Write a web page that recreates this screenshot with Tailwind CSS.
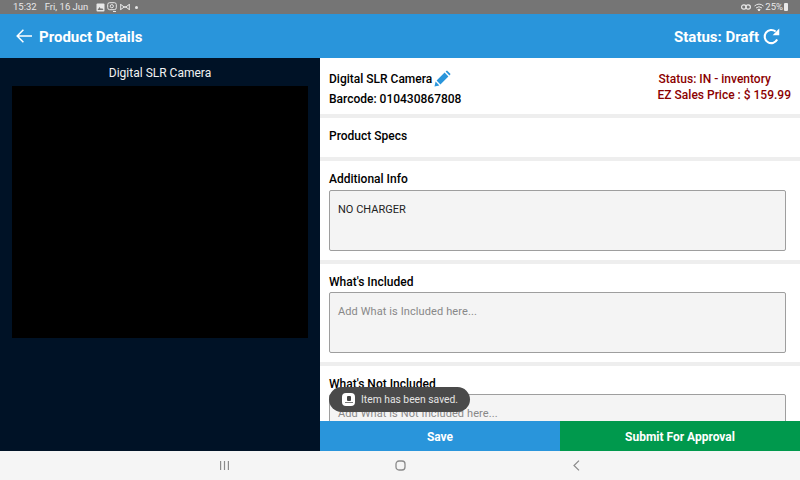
<!DOCTYPE html>
<html lang="en">
<head>
	<meta charset="UTF-8">
	<title>Product Details</title>
	<script src="https://cdn.jsdelivr.net/npm/@tailwindcss/browser@4"></script>
</head>
<body class="w-[800px] h-[480px] overflow-hidden font-['Roboto',sans-serif] flex flex-col bg-white relative">
	<!-- Status bar -->
	<div class="h-[14px] shrink-0 bg-[#757575] flex items-center justify-between pl-[13px] pr-[12px] text-[9.5px] text-[#e8e8e8]">
		<div class="flex items-center">
			<span>15:32</span>
			<span class="ml-[8px]">Fri, 16 Jun</span>
			<svg class="ml-[8px]" width="9" height="9" viewBox="0 0 9 9"><rect x="0.5" y="0.5" width="8" height="8" rx="1" fill="#e8e8e8"/><path d="M1.5 7 L3.5 4 L5 6 L6 5 L7.5 7Z" fill="#757575"/></svg>
			<svg class="ml-[2px]" width="10" height="10" viewBox="0 0 10 10" fill="none" stroke="#e8e8e8"><rect x="0.7" y="0.7" width="8.6" height="7" rx="2"/><circle cx="4.8" cy="4.2" r="1.6"/><path d="M6 9.5h3"/></svg>
			<svg class="ml-[3px]" width="10" height="8" viewBox="0 0 10 8" fill="none" stroke="#e8e8e8"><path d="M0.7 1v6M9.3 1v6M0.7 1.5 L5 4.5 L9.3 1.5M0.7 6.5 L5 3.5 L9.3 6.5"/></svg>
			<span class="ml-[5px] w-[3px] h-[3px] rounded-full bg-[#e8e8e8]"></span>
		</div>
		<div class="flex items-center">
			<svg width="10" height="6" viewBox="0 0 10 6" fill="none" stroke="#e8e8e8" stroke-width="1.2"><rect x="0.6" y="0.8" width="4.6" height="4.4" rx="2.2"/><rect x="4.8" y="0.8" width="4.6" height="4.4" rx="2.2"/></svg>
			<svg class="ml-[3px]" width="10" height="9" viewBox="0 0 10 9" fill="none" stroke="#e8e8e8"><path d="M0.5 3 Q5 -0.8 9.5 3M2 5 Q5 2.4 8 5"/><path d="M3.8 6.6 Q5 5.6 6.2 6.6 L5 8Z" fill="#e8e8e8"/></svg>
			<span class="ml-[1px]">25%</span>
			<span class="ml-[1px] w-[4px] h-[8px] bg-[#e8e8e8] rounded-[1px]"></span>
		</div>
	</div>

	<!-- Header -->
	<header class="h-[44px] shrink-0 bg-[#2995db] flex items-center justify-between pl-[16px] pr-[20px] text-white">
		<div class="flex items-center">
			<svg width="16" height="14" viewBox="0 0 16 14" fill="none" stroke="white" stroke-width="1.5"><path d="M16 7H1.2M7.4 0.8 L1.2 7 L7.4 13.2"/></svg>
			<span class="ml-[7px] pt-[2px] text-[15px] font-bold">Product Details</span>
		</div>
		<div class="flex items-center">
			<span class="pt-[2px] text-[15px] font-bold">Status: Draft</span>
			<svg class="ml-[4px]" width="17" height="17" viewBox="0 0 18 18" fill="none"><path d="M15 12.2 A7 7 0 1 1 13.4 3.8" stroke="white" stroke-width="2.2"/><path d="M10.2 7.6 H17.2 V0.6 Z" fill="white"/></svg>
		</div>
	</header>

	<!-- Content -->
	<div class="flex-1 flex min-h-0">
		<!-- Image pane -->
		<aside class="w-[320px] shrink-0 bg-[#001226] flex flex-col items-center px-[12px]">
			<div class="h-[28px] pt-[2px] flex items-center text-[12px] text-[#f2f2f2]">Digital SLR Camera</div>
			<div class="w-[296px] h-[252px] bg-black self-start"></div>
		</aside>

		<!-- Details pane -->
		<main class="flex-1 flex flex-col min-w-0 text-[12px] font-medium text-black">
			<div class="flex-1 min-h-0 overflow-hidden bg-[#eeeeee] flex flex-col gap-[4px]">
				<section class="h-[56px] shrink-0 bg-white px-[9px] pt-[12px] flex justify-between">
					<div>
						<div class="h-[18px] flex items-center">
							<span>Digital SLR Camera</span>
							<svg class="ml-[2px] -mt-[2px]" width="17" height="17" viewBox="0 0 17 17" fill="#2995db"><path d="M0.5 16.5 L1.6 11.6 L5.4 15.4 Z"/><path d="M2.6 10.6 L10.6 2.6 L14.4 6.4 L6.4 14.4 Z"/><path d="M11.6 1.6 L13 0.4 L16.6 4 L15.4 5.4 Z"/></svg>
						</div>
						<div class="mt-[2px] h-[18px] leading-[18px]">Barcode: 010430867808</div>
					</div>
					<div class="text-[#8b0000]">
						<div class="h-[17px] leading-[18px] ml-[1px]">Status: IN - inventory</div>
						<div class="h-[16px] leading-[16px]">EZ Sales Price : $ 159.99</div>
					</div>
				</section>

				<section class="h-[39px] shrink-0 bg-white pl-[9px] pt-[9px]">
					<div class="leading-[18px]">Product Specs</div>
				</section>

				<section class="h-[99px] shrink-0 bg-white pl-[9px] pr-[14px] pt-[9px]">
					<div class="leading-[18px]">Additional Info</div>
					<div class="mt-[2px] h-[61px] bg-[#f4f4f4] border border-[#9e9e9e] rounded-[2px] px-[8px] pt-[12px] text-[11px] leading-[13px] font-normal text-[#222]">NO CHARGER</div>
				</section>

				<section class="h-[98px] shrink-0 bg-white pl-[9px] pr-[14px] pt-[9px]">
					<div class="leading-[18px]">What's Included</div>
					<div class="mt-[1px] h-[61px] bg-[#f4f4f4] border border-[#9e9e9e] rounded-[2px] px-[8px] pt-[12px] text-[11px] leading-[13px] tracking-[0.1px] font-normal text-[#888]">Add What is Included here...</div>
				</section>

				<section class="h-[60px] shrink-0 bg-white pl-[9px] pr-[14px] pt-[9px]">
					<div class="leading-[18px]">What's Not Included</div>
					<div class="mt-[1px] h-[61px] bg-[#f4f4f4] border border-[#9e9e9e] rounded-[2px] px-[8px] pt-[12px] text-[11px] leading-[13px] tracking-[0.1px] font-normal text-[#888]">Add What is Not Included here...</div>
				</section>
			</div>
			<div class="h-[30px] shrink-0 flex text-[12px] font-bold text-white">
				<button class="w-[240px] pt-[2px] bg-[#2995db]">Save</button>
				<button class="w-[240px] pt-[2px] bg-[#00994d]">Submit For Approval</button>
			</div>
		</main>
	</div>

	<!-- Nav bar -->
	<nav class="h-[29px] shrink-0 bg-[#f5f5f5] relative flex items-center justify-around">
		<svg class="absolute left-[220px] top-[10px]" width="9" height="9" viewBox="0 0 9 9" stroke="#8a8a8a" stroke-width="1.2"><path d="M0.6 0V9M4.5 0V9M8.4 0V9"/></svg>
		<svg class="absolute left-[395px] top-[9px]" width="11" height="11" viewBox="0 0 11 11" fill="none" stroke="#8a8a8a" stroke-width="1.3"><rect x="1" y="1" width="9" height="9" rx="3"/></svg>
		<svg class="absolute left-[573px] top-[9px]" width="7" height="11" viewBox="0 0 7 11" fill="none" stroke="#8a8a8a" stroke-width="1.2"><path d="M6 0.6 L1 5.5 L6 10.4"/></svg>
	</nav>

	<!-- Toast -->
	<div class="absolute left-[329px] top-[387px] w-[141px] h-[25px] rounded-full bg-[#4a4a4a] flex items-center pl-[13px] text-[10.3px] text-[#e6e6e6]">
		<span class="w-[13px] h-[13px] rounded-[4px] bg-white flex flex-col items-center justify-center gap-[1px]">
			<span class="w-[4px] h-[5px] bg-[#444] rounded-[1px]"></span>
			<span class="w-[8px] h-[1px] bg-[#777]"></span>
		</span>
		<span class="ml-[6px] whitespace-nowrap">Item has been saved.</span>
	</div>
</body>
</html>
